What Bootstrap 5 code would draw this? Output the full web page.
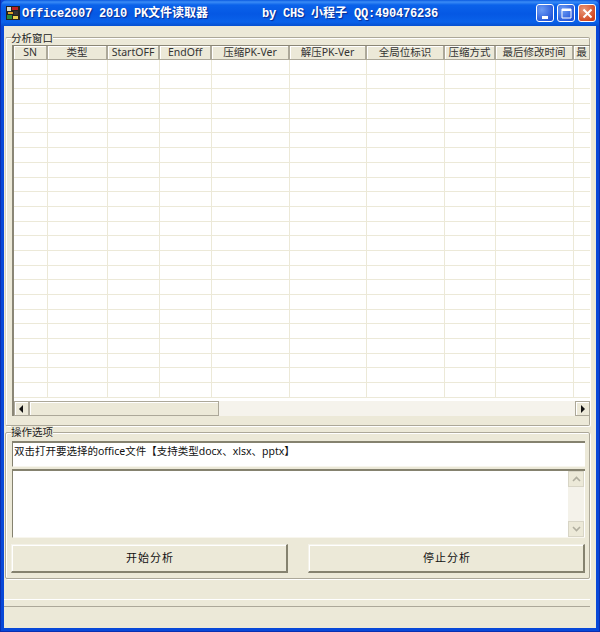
<!DOCTYPE html>
<html lang="zh">
<head>
<meta charset="utf-8">
<title>Office2007 2010 PK文件读取器</title>
<link href="https://cdn.jsdelivr.net/npm/bootstrap@5.3.0/dist/css/bootstrap.min.css" rel="stylesheet">
<style>
html,body{margin:0;width:600px;height:632px;overflow:hidden;background:#0a3fd8}
body{font-family:"Noto Sans","Noto Sans CJK SC","Liberation Sans",sans-serif;font-size:10.5px;line-height:1;color:#222}
.xp-win{width:600px;height:632px;background:#0848d8;padding:0 3px 4px 3px;border-left:1px solid #0a2fb0;border-right:1px solid #0a2fb0;border-bottom:1px solid #0a2fb0}
.xp-title{height:26px;margin:0 -3px;padding:0 3px 0 4px;background:linear-gradient(#0a5ae0 0,#3a8cf6 2px,#0a62ea 5px,#0558e4 14px,#0a62ea 22px,#0650d0 26px);color:#fff;font-family:"Liberation Mono",monospace;font-weight:700;font-size:12px;text-shadow:1px 1px 1px #0a2a90;border-radius:6px 6px 0 0}
.xp-title .ttl-a{width:240px;margin-left:1px;letter-spacing:-.2px}
.xp-title .ttl-b{letter-spacing:-.2px}
.xp-title .ttl-cjk{font-family:"Noto Sans CJK SC",sans-serif;font-size:12px;letter-spacing:0}
.xp-wbtn{width:18px;height:18px;border:1px solid #fff;border-radius:3px;background:radial-gradient(circle at 30% 30%,#6c9cf4,#2455d8 80%);margin-left:3px;display:flex;align-items:center;justify-content:center}
.xp-wbtn.xp-close{background:radial-gradient(circle at 30% 30%,#e8987a,#d0431c 80%)}
.xp-body{height:602px;background:#ece9d8;padding:11px 6px 0 1px;width:592px}
.xp-group{border:1px solid #aca899;box-shadow:inset 1px 1px 0 #fff,1px 1px 0 #fff;position:relative;border-radius:2px}
.xp-legend{position:absolute;left:5px;top:-6px;background:#ece9d8;line-height:12px;font-size:10.5px;font-family:"Noto Sans CJK SC",sans-serif}
.grp-top{height:389px;padding:7px 0 0 6px;border-left-color:#d8d4c4}
.grp-bot{height:147px;margin-top:6px;padding:8px 5px 0 6px}
.grp-bot .xp-legend{top:-7px}
.grid-wrap{width:578px;height:371px;background:#fff;border-left:2px solid #8a8676;border-top:1px solid #8a8676;overflow:hidden}
.grid-inner{height:355px;overflow:hidden}
.xp-tbl{table-layout:fixed;border-collapse:separate;border-spacing:0;width:577px}
.xp-tbl th{height:14px;background:#ece9d8;font-weight:400;font-size:10.5px;text-align:center;padding:0;border-right:2px solid #aca899;border-bottom:1px solid #aca899;box-shadow:inset 1px 1px 0 #fff;white-space:nowrap;overflow:hidden;line-height:13px;color:#333}
.xp-tbl td{height:14.7px;padding:0;border-right:1px solid #ece9d8;border-bottom:1px solid #ece9d8;background:#fff}
.xp-hbar{height:15px;background:#f5f3ec;display:flex}
.xp-sbtn{width:15px;height:15px;background:#ece9d8;border:1px solid #aca899;box-shadow:inset 1px 1px 0 #fff;display:flex;align-items:center;justify-content:center;flex:none}
.xp-thumb{width:190px;background:#ece9d8;border:1px solid #aca899;box-shadow:inset 1px 1px 0 #fff}
.xp-input{width:573px;height:26px;background:#fff;border-top:2px solid #85826f;border-left:1px solid #85826f;border-bottom:1px solid #f8f6ee;padding:1px 0 0 1px;font-size:10.5px;line-height:14px;white-space:nowrap;color:#111}
.xp-memo{width:573px;height:69px;margin-top:2px;background:#fff;border-top:2px solid #85826f;border-left:1px solid #85826f;border-bottom:1px solid #f8f6ee;display:flex;justify-content:flex-end;padding-right:1px}
.xp-vbar{width:16px;background:#f4f2ea;display:flex;flex-direction:column;justify-content:space-between}
.xp-vbtn{height:16px;background:#ece9d8;border:1px solid #d8d5c6;display:flex;align-items:center;justify-content:center}
.xp-actions{margin-top:6px;width:574px;margin-left:-1px}
.xp-btn{width:277px;height:29px;padding:0 0 2px 2px;background:#ece9d8;border:1px solid #f4f2e8;border-right:2px solid #85826f;border-bottom:2px solid #85826f;border-radius:0;box-shadow:inset 1px 1px 0 #fff;font-size:11px;letter-spacing:1px;line-height:1;color:#111;font-family:"Noto Sans CJK SC",sans-serif}
.xp-status{margin-top:20px;height:8px;margin-left:-1px;border-top:1px solid #fff;border-bottom:1px solid #aca899}
</style>
</head>
<body>
<div class="xp-win">
  <div class="xp-title d-flex align-items-center">
    <svg width="16" height="16" viewBox="0 0 16 16" class="flex-shrink-0"><rect x="1" y="1" width="14" height="14" fill="#222"/><rect x="2" y="2" width="4" height="4" fill="#d8d8c8"/><rect x="7" y="2" width="6" height="3" fill="#c02020"/><rect x="3" y="7" width="5" height="2" fill="#e0a020"/><rect x="9" y="6" width="4" height="4" fill="#333"/><rect x="2" y="10" width="5" height="4" fill="#2a8a3a"/><rect x="8" y="11" width="5" height="3" fill="#e8d050"/></svg>
    <span class="ttl-a text-nowrap">Office2007 2010 PK<span class="ttl-cjk">文件读取器</span></span>
    <span class="text-nowrap ttl-b">by CHS <span class="ttl-cjk">小程子</span> QQ:490476236</span>
    <span class="ms-auto d-flex align-items-center">
      <span class="xp-wbtn"><svg width="11" height="11" viewBox="0 0 11 11"><rect x="2" y="8" width="6" height="3" fill="#fff"/></svg></span>
      <span class="xp-wbtn"><svg width="11" height="11" viewBox="0 0 11 11"><path d="M1 1h9v9H1z" fill="none" stroke="#fff"/><path d="M1 2h9" stroke="#fff" stroke-width="2"/></svg></span>
      <span class="xp-wbtn xp-close"><svg width="11" height="11" viewBox="0 0 11 11"><path d="M1.5 1.5l8 8M9.5 1.5l-8 8" stroke="#fff" stroke-width="2"/></svg></span>
    </span>
  </div>
  <div class="xp-body">
    <div class="xp-group grp-top">
      <span class="xp-legend">分析窗口</span>
      <div class="grid-wrap">
        <div class="grid-inner">
          <table class="xp-tbl">
            <colgroup><col style="width:34px"><col style="width:60px"><col style="width:52px"><col style="width:52px"><col style="width:78px"><col style="width:77px"><col style="width:78px"><col style="width:51px"><col style="width:78px"><col style="width:17px"></colgroup>
            <thead><tr><th>SN</th><th>类型</th><th>StartOFF</th><th>EndOff</th><th>压缩PK-Ver</th><th>解压PK-Ver</th><th>全局位标识</th><th>压缩方式</th><th>最后修改时间</th><th>最</th></tr></thead>
            <tbody id="rows"></tbody>
          </table>
        </div>
        <div class="xp-hbar">
          <span class="xp-sbtn"><svg width="5" height="8" viewBox="0 0 5 8"><path d="M4 0v8L0 4z" fill="#111"/></svg></span>
          <span class="xp-thumb"></span>
          <span class="xp-sbtn ms-auto me-0"><svg width="5" height="8" viewBox="0 0 5 8"><path d="M1 0v8l4-4z" fill="#111"/></svg></span>
        </div>
      </div>
    </div>
    <div class="xp-group grp-bot">
      <span class="xp-legend">操作选项</span>
      <div class="xp-input">双击打开要选择的office文件【支持类型docx、xlsx、pptx】</div>
      <div class="xp-memo">
        <div class="xp-vbar">
          <span class="xp-vbtn"><svg width="9" height="6" viewBox="0 0 9 6"><path d="M1 5l3.5-3.5L8 5" fill="none" stroke="#b0ae9f" stroke-width="1.6"/></svg></span>
          <span class="xp-vbtn"><svg width="9" height="6" viewBox="0 0 9 6"><path d="M1 1l3.5 3.5L8 1" fill="none" stroke="#b0ae9f" stroke-width="1.6"/></svg></span>
        </div>
      </div>
      <div class="xp-actions d-flex justify-content-between">
        <button type="button" class="btn xp-btn">开始分析</button>
        <button type="button" class="btn xp-btn">停止分析</button>
      </div>
    </div>
    <div class="xp-status"></div>
  </div>
</div>
<script>
var t=document.getElementById('rows'),h='';
for(var i=0;i<23;i++){h+='<tr>'+'<td></td>'.repeat(10)+'</tr>';}
t.innerHTML=h;
</script>
<script src="https://cdn.jsdelivr.net/npm/bootstrap@5.3.0/dist/js/bootstrap.bundle.min.js"></script>
</body>
</html>
